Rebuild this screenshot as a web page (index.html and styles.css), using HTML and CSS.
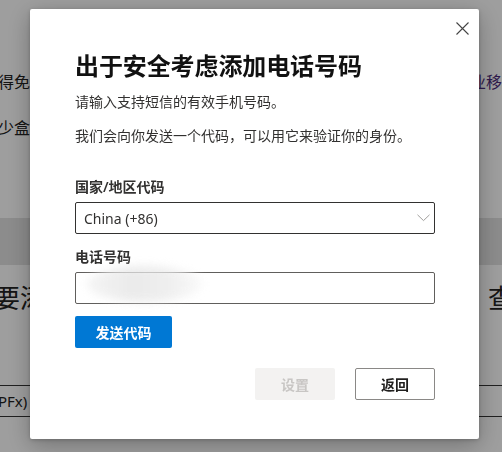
FILE: index.html
```html
<!DOCTYPE html>
<html lang="zh-CN">
<head>
<meta charset="utf-8">
<title>添加电话号码</title>
<link rel="stylesheet" href="styles.css">
</head>
<body>
<div class="page">
  <div class="top">
    <div class="bg-row"><span class="cut-left">得免</span><span class="link">业移</span></div>
    <div class="bg-row"><span class="cut-left">少盒，</span><span></span></div>
  </div>
  <div class="band"></div>
  <div class="heading-row"><span class="cut-left2">要添</span><span class="cut-right">查</span></div>
  <div class="table-row"><span class="cut-left">PFx)</span></div>
</div>
<div class="overlay"></div>
<div class="modal" role="dialog">
  <button class="close" aria-label="关闭">
    <svg width="13" height="13" viewBox="0 0 13 13"><path d="M0.5 0.5 L12.5 12.5 M12.5 0.5 L0.5 12.5" stroke="#444" stroke-width="1.1" fill="none"/></svg>
  </button>
  <h1 class="title">出于安全考虑添加电话号码</h1>
  <p class="text p1">请输入支持短信的有效手机号码。</p>
  <p class="text p2">我们会向你发送一个代码，可以用它来验证你的身份。</p>
  <label class="label l1">国家/地区代码</label>
  <div class="select">
    <span>China (+86)</span>
    <svg width="13" height="8" viewBox="0 0 13 8"><path d="M0.5 0.8 L6.5 6.6 L12.5 0.8" stroke="#a19f9d" stroke-width="1" fill="none"/></svg>
  </div>
  <label class="label l2">电话号码</label>
  <div class="field">
    <div class="input"></div>
    <div class="smudge"></div>
  </div>
  <button class="primary">发送代码</button>
  <div class="footer">
    <button class="btn disabled">设置</button>
    <button class="btn secondary">返回</button>
  </div>
</div>
</body>
</html>
```

FILE: styles.css
```css
* { box-sizing: border-box; }
html, body { margin: 0; padding: 0; }
body {
  width: 502px;
  height: 452px;
  overflow: hidden;
  background: #ffffff;
  font-family: "Noto Sans", "Noto Sans CJK SC", sans-serif;
  color: #323130;
}
.page {
  height: 452px;
  overflow: hidden;
  color: #222;
}
.top {
  height: 218px;
  padding-top: 70px;
  display: flex;
  flex-direction: column;
  gap: 22px;
}
.bg-row {
  display: flex;
  justify-content: space-between;
  font-size: 16px;
  line-height: 24px;
}
.cut-left { margin-left: -2px; }
.link { color: #4b2a7a; }
.band {
  height: 47px;
  background: #e2e2e2;
}
.heading-row {
  margin-top: 15px;
  display: flex;
  justify-content: space-between;
  font-size: 26px;
  line-height: 36px;
}
.cut-left2 { margin-left: -6px; }
.cut-right { margin-right: -12px; }
.table-row {
  margin-top: 69px;
  height: 32px;
  border-top: 1px solid #333;
  border-bottom: 1px solid #333;
  font-size: 15px;
  line-height: 30px;
}
.overlay {
  position: fixed;
  inset: 0;
  background: rgba(0, 0, 0, 0.38);
}
.modal {
  position: fixed;
  top: 9px;
  left: 30px;
  width: 449px;
  height: 430px;
  background: #fff;
  border-radius: 2px;
  box-shadow: 0 6px 24px rgba(0, 0, 0, 0.28), 0 1px 4px rgba(0, 0, 0, 0.2);
  padding: 41px 44px 0 45px;
  display: flex;
  flex-direction: column;
  align-items: stretch;
}
.close {
  position: absolute;
  top: 13px;
  right: 10px;
  width: 13px;
  height: 13px;
  padding: 0;
  border: 0;
  background: transparent;
  display: flex;
}
.title {
  margin: 0;
  font-size: 24px;
  line-height: 32px;
  font-weight: 700;
  color: #111;
  letter-spacing: -0.1px;
}
.text {
  margin: 0;
  font-size: 14px;
  line-height: 20px;
  color: #323130;
}
.p1 { margin-top: 10px; }
.p2 { margin-top: 14px; }
.label {
  font-size: 14px;
  line-height: 20px;
  font-weight: 600;
  color: #323130;
  display: block;
}
.l1 { margin-top: 31px; }
.l2 { margin-top: 13px; }
.select {
  margin-top: 5px;
  height: 32px;
  border: 1px solid #323130;
  border-radius: 2px;
  display: flex;
  align-items: center;
  justify-content: space-between;
  padding: 0 4px 0 8px;
  font-size: 14px;
  color: #323130;
}
.field {
  position: relative;
  margin-top: 5px;
}
.input {
  height: 32px;
  border: 1px solid #605e5c;
  border-radius: 2px;
}
.smudge {
  position: absolute;
  left: 12px;
  top: -6px;
  width: 115px;
  height: 36px;
  border-radius: 50%;
  background: linear-gradient(90deg, #f2f2f2 0%, #e6e6e6 40%, #ebebeb 70%, #f8f8f8 100%);
  filter: blur(4px);
  opacity: 0.8;
}
.primary {
  margin-top: 12px;
  align-self: flex-start;
  width: 97px;
  height: 32px;
  border: 0;
  border-radius: 2px;
  background: #0078d4;
  color: #fff;
  font-family: inherit;
  font-size: 14px;
  font-weight: 700;
}
.footer {
  margin-top: 20px;
  display: flex;
  justify-content: flex-end;
  gap: 20px;
}
.btn {
  width: 80px;
  height: 32px;
  border-radius: 2px;
  font-family: inherit;
  font-size: 14px;
  font-weight: 600;
}
.disabled {
  background: #f3f2f1;
  border: 0;
  color: #c8c6c4;
}
.secondary {
  background: #fff;
  border: 1px solid #8a8886;
  color: #201f1e;
}
```
